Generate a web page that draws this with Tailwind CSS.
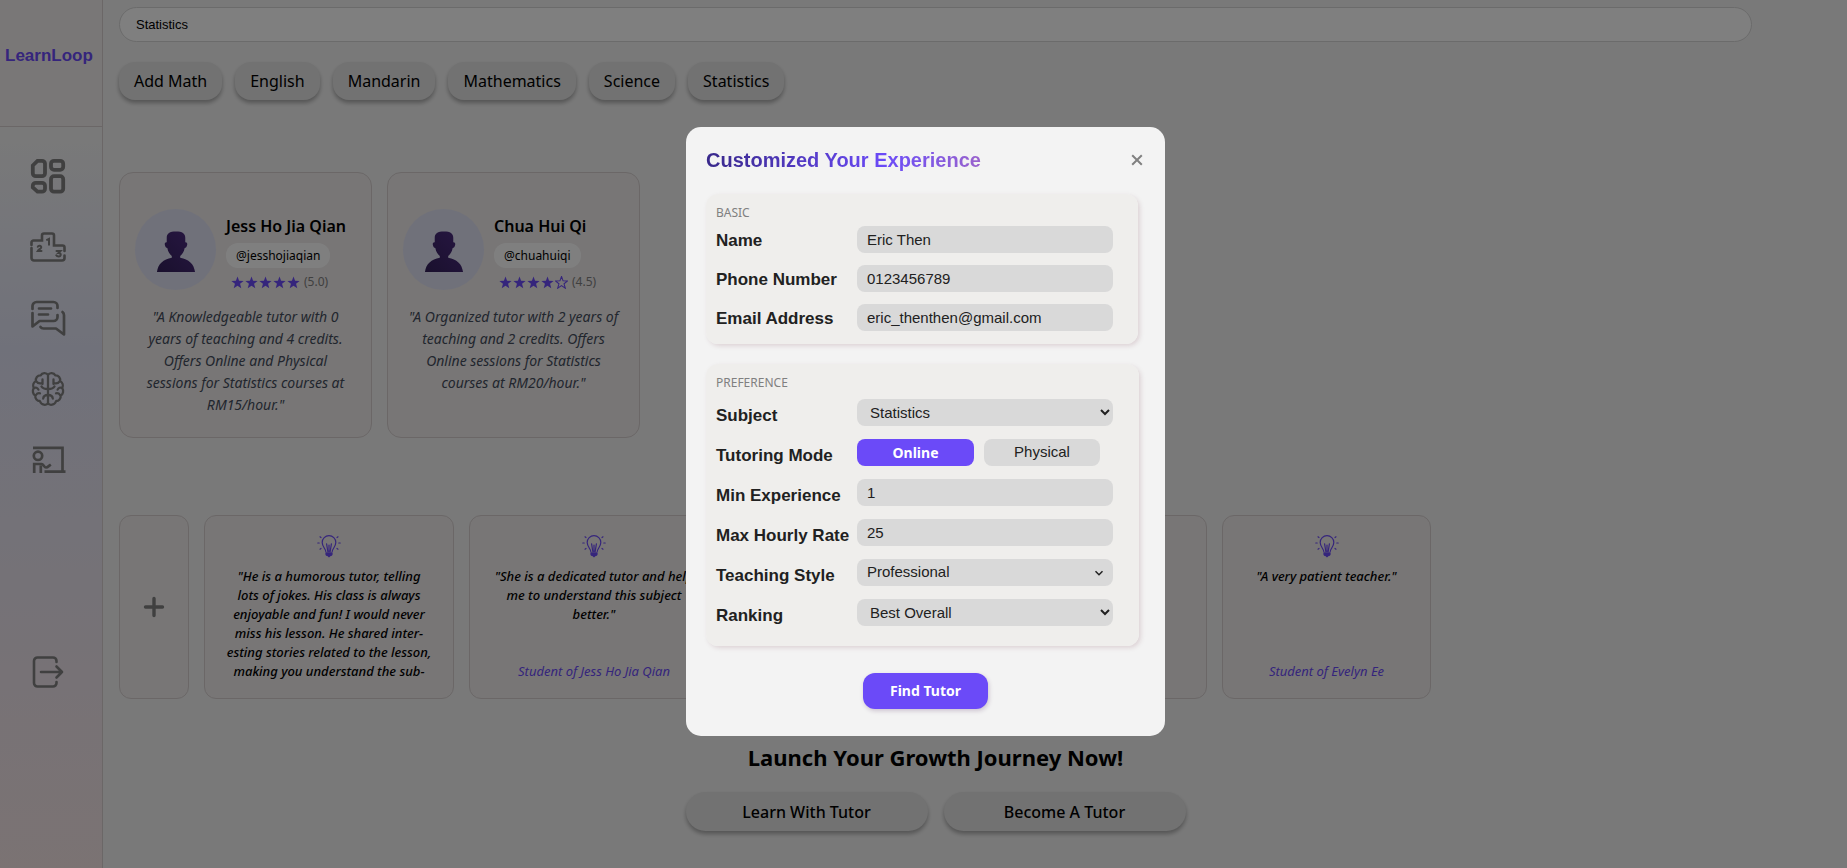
<!DOCTYPE html>
<html lang="en">
<head>
<meta charset="utf-8">
<meta name="viewport" content="width=device-width, initial-scale=1">
<title>LearnLoop</title>
<script src="https://cdn.jsdelivr.net/npm/@tailwindcss/browser@4"></script>
</head>
<body class="bg-[#f3f3f3] font-['Noto_Sans',sans-serif] text-black">
<svg class="absolute size-0" aria-hidden="true">
  <defs><linearGradient id="shade" x1="0" x2="1" y1="1" y2="0"><stop offset="0" stop-color="#33205a"/><stop offset="1" stop-color="#4e2d84"/></linearGradient></defs>
  <symbol id="star" viewBox="0 0 24 24"><path d="M12 1l2.900 7.900 8.400.3-6.600 5.200 2.300 8.100-7-4.700-7 4.700 2.300-8.100L.7 9.200l8.400-.3z"/></symbol>
  <symbol id="bulb" viewBox="0 0 24 24">
    <g fill="none" stroke="currentColor" stroke-width="1.200" stroke-linecap="round">
      <path d="M8.800 17.500c0-2.500-3.600-4.700-3.600-9.100a6.800 6.800 0 0 1 13.600 0c0 4.400-3.600 6.600-3.600 9.100"/>
      <path d="M10.800 17.500 9.600 9.800M13.200 17.500l1.200-7.700M12 17.500V11"/>
      <path d="M.8 9h1.400M21.800 9h1.400M3 2.800l1 .7M21 2.800l-1 .7M3 15.200l1-.7M21 15.200l-1-.7"/>
    </g>
    <path fill="currentColor" d="M8.400 18.200h7.200v2c0 1-1 1.700-1.900 1.900L12 23.500l-1.700-1.400c-.9-.2-1.900-.9-1.900-1.900z"/>
  </symbol>
  <symbol id="person" viewBox="0 0 40 42">
    <path d="M10.500 7c0-4.500 3-6.500 9.500-6.500S29.500 2.500 29.500 7v4.500c1.600-.2 2.300 1 1.900 2.800-.4 1.900-1.300 3-2.500 3-.8 4-2.400 6.500-4.600 8.200v1.800C33 29 38.500 33.500 39.500 42H.5C1.500 33.500 7 29 15.700 27.300v-1.800c-2.200-1.700-3.800-4.200-4.600-8.200-1.200 0-2.100-1.100-2.500-3-.4-1.800.3-3 1.900-2.800z" fill="url(#shade)"/>
  </symbol>
</svg>

<div class="flex min-h-screen">
  <aside class="flex w-[103px] shrink-0 flex-col border-r border-[#d6cfcf] bg-linear-to-b from-[#f3f3f3] from-15% via-[#e1e3f5] via-40% to-[#f6e6e7]">
    <div class="flex h-[127px] items-center border-b border-[#d6cfcf] bg-[#f3eeef] pb-[14px] pl-[5px]">
      <a href="#" class="font-['Liberation_Sans',sans-serif] text-[17px] font-bold text-[#6b4af8]">LearnLoop</a>
    </div>
    <nav class="flex flex-1 flex-col items-center gap-[35px] pt-[31px] pr-[6px] text-[#808080]">
      <a href="#" aria-label="Dashboard"><svg class="size-9" viewBox="0 0 36 36" fill="none" stroke="currentColor" stroke-width="3.800"><path d="M7.500 2.800H12a3 3 0 0 1 3 3v9.400a3 3 0 0 1-3 3H5.800a3 3 0 0 1-3-3V7.500z"/><rect x="21" y="2.800" width="12.200" height="9" rx="3"/><rect x="21" y="18.200" width="12.200" height="15.500" rx="3"/><path d="M5.800 24.800H12a3 3 0 0 1 3 3v2.900a3 3 0 0 1-3 3H7.500l-4.700-4.200v-1.700a3 3 0 0 1 3-3z"/></svg></a>
      <a href="#" aria-label="Ranking"><svg class="size-9" viewBox="0 0 36 36" fill="none" stroke="currentColor" stroke-width="2.600" stroke-linecap="round"><path d="M1.500 16v-2.500a2 2 0 0 1 2-2h8.500V6.500a2 2 0 0 1 2-2h8a2 2 0 0 1 2 2v10h8.500a2 2 0 0 1 2 2V22M34.500 26.500V29a2.500 2.500 0 0 1-2.500 2.500H4A2.500 2.500 0 0 1 1.500 29V19"/><path stroke-width="2" d="M17 10.800l2-1v6M7.800 17.800c.5-1.500 3.600-1.300 3.400.5-.1 1.300-2.300 2-3.400 3.700h3.700M26.500 22h4l-2 2c3 0 2.900 3.500.2 3.500-1.200 0-2-.4-2.400-1.200"/></svg></a>
      <a href="#" aria-label="Messages"><svg class="size-9" viewBox="0 0 36 36" fill="none" stroke="currentColor" stroke-width="2.700" stroke-linecap="round" stroke-linejoin="round"><path d="M2.500 9V6a4 4 0 0 1 4-4h17a4 4 0 0 1 4 4v2M2.500 13v13.500l7-5.500H23.500a4 4 0 0 0 4-4v-2M9 8.500h12M9 14.500h9M32.500 12c1 .8 1.500 1.800 1.500 3.200v19.300l-8-6H13.500c-1.500 0-2.500-.7-3-1.500"/></svg></a>
      <a href="#" aria-label="Quiz"><svg class="size-9" viewBox="0 0 36 36" fill="none" stroke="currentColor" stroke-width="2.300" stroke-linecap="round" stroke-linejoin="round"><path d="M18 4c-1.500-2.800-6-2.500-7.200.3C7.500 4 5.200 7 6 10c-2.800 1.600-3.500 4.500-2.200 7-1.700 2.700-1 6 1.400 7.400-.2 3.200 2 5.600 4.600 5.600 1.500 4.400 6.700 4.800 8.200 2zM18 4c1.500-2.800 6-2.500 7.200.3C28.500 4 30.800 7 30 10c2.800 1.600 3.500 4.500 2.200 7 1.700 2.700 1 6-1.400 7.400.2 3.200-2 5.600-4.600 5.600-1.500 4.400-6.700 4.800-8.200 2M18 4v28"/><path d="M12.500 8.500v4.500M6 10c1.200 2 3 2.600 5 2.300M3.800 17c2-1 3.800-.2 4.600 1.600M18 18c-3.500 0-5.700-1-6.500-2.500M6 24c1-1.600 2.500-2 4-1.700M18 24c-3 0-4.600 1.300-4.800 3.500M23.500 8.500v4.500M30 10c-1.200 2-3 2.600-5 2.300M32.200 17c-2-1-3.800-.2-4.600 1.600M18 18c3.500 0 5.700-1 6.500-2.500M30 24c-1-1.600-2.500-2-4-1.700M18 24c3 0 4.600 1.300 4.800 3.500"/></svg></a>
      <a href="#" aria-label="Tutoring"><svg class="size-9" viewBox="0 0 36 36" fill="none" stroke="currentColor" stroke-width="2.700"><path d="M3 5.800h29.500v23.600M14.500 29.600h21"/><circle cx="8" cy="13.800" r="4.200"/><path d="M4.200 31V22h7.500c1.700 0 2.500 3.500 4.300 3.500 1.500 0 3-1.700 4.800-3M10.800 31v-7.500"/></svg></a>
      <a href="#" aria-label="Log out" class="mt-auto mb-[178px]"><svg class="size-9" viewBox="0 0 36 36" fill="none" stroke="currentColor" stroke-width="2.600" stroke-linecap="round" stroke-linejoin="round"><path d="M26.500 8V7a3.500 3.500 0 0 0-3.500-3.500H7.500A3.500 3.500 0 0 0 4 7v22a3.500 3.500 0 0 0 3.500 3.500H23a3.500 3.500 0 0 0 3.500-3.500v-1M11 18h21M26.500 12.500 32 18l-5.500 5.500"/></svg></a>
    </nav>
  </aside>

  <main class="flex min-w-0 flex-1 flex-col pt-[7px] pr-[95px] pl-4">
    <input type="search" aria-label="Search subject" value="Statistics" class="h-[35px] w-full rounded-full border border-[#d6d6d6] bg-white px-4 font-['Liberation_Sans',sans-serif] text-[13px]">
    <div class="mt-5 flex gap-[13px] text-base">
      <button class="h-[38px] rounded-2xl bg-[#e4e4e4] px-[15px] shadow-[0_3px_4px_rgba(0,0,0,0.3)]">Add Math</button>
      <button class="h-[38px] rounded-2xl bg-[#e4e4e4] px-[15px] shadow-[0_3px_4px_rgba(0,0,0,0.3)]">English</button>
      <button class="h-[38px] rounded-2xl bg-[#e4e4e4] px-[15px] shadow-[0_3px_4px_rgba(0,0,0,0.3)]">Mandarin</button>
      <button class="h-[38px] rounded-2xl bg-[#e4e4e4] px-[15px] shadow-[0_3px_4px_rgba(0,0,0,0.3)]">Mathematics</button>
      <button class="h-[38px] rounded-2xl bg-[#e4e4e4] px-[15px] shadow-[0_3px_4px_rgba(0,0,0,0.3)]">Science</button>
      <button class="h-[38px] rounded-2xl bg-[#e4e4e4] px-[15px] shadow-[0_3px_4px_rgba(0,0,0,0.3)]">Statistics</button>
    </div>

    <section class="mt-[72px] flex gap-[15px]" aria-label="Tutors">
      <article class="min-h-[266px] w-[253px] rounded-[14px] border border-[#d6cfcf] bg-[#f0ecec] px-[15px] pt-9">
        <div class="flex gap-[10px]">
          <div class="flex size-[81px] shrink-0 items-center justify-center rounded-full bg-[#e1e3f5] pt-1"><svg class="h-[41px] w-10"><use href="#person"/></svg></div>
          <div class="flex flex-col items-start pt-[5px] whitespace-nowrap">
            <h3 class="text-base leading-6 font-semibold">Jess Ho Jia Qian</h3>
            <a href="#" class="mt-[5px] rounded-xl bg-white px-[10px] text-xs leading-[25px]">@jesshojiaqian</a>
            <div class="mt-1 flex items-center pl-[5px] text-[#6b4af8]">
              <span class="flex gap-px" role="img" aria-label="5 stars"><svg class="size-[13px] fill-current"><use href="#star"/></svg><svg class="size-[13px] fill-current"><use href="#star"/></svg><svg class="size-[13px] fill-current"><use href="#star"/></svg><svg class="size-[13px] fill-current"><use href="#star"/></svg><svg class="size-[13px] fill-current"><use href="#star"/></svg></span>
              <span class="ml-1 text-xs leading-5 text-[#808080]">(5.0)</span>
            </div>
          </div>
        </div>
        <p class="mt-[14px] text-center text-sm leading-[22px] text-[#444c5c] italic">"A Knowledgeable tutor with 0<br>years of teaching and 4 credits.<br>Offers Online and Physical<br>sessions for Statistics courses at<br>RM15/hour."</p>
      </article>
      <article class="min-h-[266px] w-[253px] rounded-[14px] border border-[#d6cfcf] bg-[#f0ecec] px-[15px] pt-9">
        <div class="flex gap-[10px]">
          <div class="flex size-[81px] shrink-0 items-center justify-center rounded-full bg-[#e1e3f5] pt-1"><svg class="h-[41px] w-10"><use href="#person"/></svg></div>
          <div class="flex flex-col items-start pt-[5px] whitespace-nowrap">
            <h3 class="text-base leading-6 font-semibold">Chua Hui Qi</h3>
            <a href="#" class="mt-[5px] rounded-xl bg-white px-[10px] text-xs leading-[25px]">@chuahuiqi</a>
            <div class="mt-1 flex items-center pl-[5px] text-[#6b4af8]">
              <span class="flex gap-px" role="img" aria-label="4.5 stars"><svg class="size-[13px] fill-current"><use href="#star"/></svg><svg class="size-[13px] fill-current"><use href="#star"/></svg><svg class="size-[13px] fill-current"><use href="#star"/></svg><svg class="size-[13px] fill-current"><use href="#star"/></svg><svg class="size-[13px] fill-none stroke-current stroke-2"><use href="#star"/></svg></span>
              <span class="ml-1 text-xs leading-5 text-[#808080]">(4.5)</span>
            </div>
          </div>
        </div>
        <p class="mt-[14px] text-center text-sm leading-[22px] whitespace-nowrap text-[#444c5c] italic">"A Organized tutor with 2 years of<br>teaching and 2 credits. Offers<br>Online sessions for Statistics<br>courses at RM20/hour."</p>
      </article>
    </section>

    <section class="mt-[77px] flex h-[184px] gap-[15px] text-center text-[13px] leading-[19px] whitespace-nowrap italic" aria-label="Testimonials">
      <button aria-label="Add testimonial" class="flex w-[70px] shrink-0 items-center justify-center rounded-xl border border-[#d6cfcf] bg-[#f0ecec] text-[#808080]"><svg class="size-6" viewBox="0 0 24 24" stroke="currentColor" stroke-width="3.400" stroke-linecap="round"><path d="M12 3.500v17M3.500 12h17"/></svg></button>
      <article class="flex w-[250px] shrink-0 flex-col items-center rounded-xl border border-[#d6cfcf] bg-[#f0ecec] pt-[18px]">
        <svg class="size-6 text-[#6b4af8]"><use href="#bulb"/></svg>
        <p class="mt-[9px] font-medium">"He is a humorous tutor, telling<br>lots of jokes. His class is always<br>enjoyable and fun! I would never<br>miss his lesson. He shared inter-<br>esting stories related to the lesson,<br>making you understand the sub-</p>
      </article>
      <article class="flex w-[250px] shrink-0 flex-col items-center rounded-xl border border-[#d6cfcf] bg-[#f0ecec] pt-[18px] pb-[17px]">
        <svg class="size-6 text-[#6b4af8]"><use href="#bulb"/></svg>
        <p class="mt-[9px] font-medium">"She is a dedicated tutor and help<br>me to understand this subject<br>better."</p>
        <a href="#" class="mt-auto text-[#6b4af8]">Student of Jess Ho Jia Qian</a>
      </article>
      <article class="w-[473px] shrink-0 rounded-xl border border-[#d6cfcf] bg-[#f0ecec]"></article>
      <article class="flex w-[209px] shrink-0 flex-col items-center rounded-xl border border-[#d6cfcf] bg-[#f0ecec] pt-[18px] pb-[17px]">
        <svg class="size-6 text-[#6b4af8]"><use href="#bulb"/></svg>
        <p class="mt-[9px] font-medium">"A very patient teacher."</p>
        <a href="#" class="mt-auto text-[#6b4af8]">Student of Evelyn Ee</a>
      </article>
    </section>

    <section class="mt-[42px] flex flex-col items-center">
      <h2 class="text-[22px] leading-8 font-bold">Launch Your Growth Journey Now!</h2>
      <div class="mt-[19px] flex gap-4 text-base font-medium">
        <button class="h-[39px] w-[242px] rounded-full bg-[#e4e4e4] shadow-[0_3px_4px_rgba(0,0,0,0.3)]">Learn With Tutor</button>
        <button class="h-[39px] w-[242px] rounded-full bg-[#e4e4e4] shadow-[0_3px_4px_rgba(0,0,0,0.3)]">Become A Tutor</button>
      </div>
    </section>
  </main>
</div>

<div class="fixed inset-0 flex items-center justify-center bg-black/50 pb-[5px] pl-1">
  <form role="dialog" aria-labelledby="dialog-title" class="w-[479px] rounded-[15px] bg-[#f3f3f3] px-5 pt-4 pb-[27px] font-['Liberation_Sans',sans-serif] text-[#212121]">
    <div class="flex items-center justify-between">
      <h1 id="dialog-title" class="bg-linear-to-r from-[#38288a] via-[#6b4af8] via-65% to-[#9a62cc] bg-clip-text text-[20px] leading-[34px] font-bold text-transparent">Customized Your Experience</h1>
      <button type="button" aria-label="Close" class="text-[#808080]"><svg class="size-4" viewBox="0 0 16 16" stroke="currentColor" stroke-width="2"><path d="M3.200 3.200l9.600 9.600M12.800 3.200l-9.600 9.600"/></svg></button>
    </div>

    <fieldset class="mt-[17px] mr-[7px] rounded-xl bg-[#efeeec] pt-[10px] pb-[13px] pl-[10px] shadow-[2px_2px_4px_rgba(160,120,130,0.25)]" aria-label="Basic">
      <p class="font-['Noto_Sans',sans-serif] text-xs leading-[18px] text-[#808080]">BASIC</p>
      <div class="mt-1 grid grid-cols-[141px_256px] gap-y-3 text-[15px]">
        <label for="name" class="pt-[5px] text-[17px] leading-5 font-bold">Name</label>
        <input id="name" value="Eric Then" class="h-[27px] rounded-lg bg-[#d9d9d9] px-[10px]">
        <label for="phone" class="pt-[5px] text-[17px] leading-5 font-bold">Phone Number</label>
        <input id="phone" type="tel" value="0123456789" class="h-[27px] rounded-lg bg-[#d9d9d9] px-[10px]">
        <label for="email" class="pt-[5px] text-[17px] leading-5 font-bold">Email Address</label>
        <input id="email" type="email" value="eric_thenthen@gmail.com" class="h-[27px] rounded-lg bg-[#d9d9d9] px-[10px]">
      </div>
    </fieldset>

    <fieldset class="mt-5 mr-[6px] rounded-xl bg-[#efeeec] pt-[10px] pb-5 pl-[10px] shadow-[2px_2px_4px_rgba(160,120,130,0.25)]" aria-label="Preference">
      <p class="font-['Noto_Sans',sans-serif] text-xs leading-[18px] text-[#808080]">PREFERENCE</p>
      <div class="mt-[7px] grid grid-cols-[141px_256px] gap-y-[13px] text-[15px]">
        <label for="subject" class="pt-[7px] text-[17px] leading-5 font-bold">Subject</label>
        <select id="subject" class="h-[27px] rounded-lg bg-[#d9d9d9] px-[9px]"><option>Statistics</option></select>
        <span class="pt-[7px] text-[17px] leading-5 font-bold">Tutoring Mode</span>
        <div class="flex gap-[10px]">
          <button type="button" aria-pressed="true" class="h-[27px] w-[117px] rounded-lg bg-[#6b4af8] font-['Noto_Sans',sans-serif] text-sm font-bold text-white">Online</button>
          <button type="button" aria-pressed="false" class="h-[27px] w-[116px] rounded-lg bg-[#d9d9d9]">Physical</button>
        </div>
        <label for="experience" class="pt-[7px] text-[17px] leading-5 font-bold">Min Experience</label>
        <input id="experience" value="1" class="h-[27px] rounded-lg bg-[#d9d9d9] px-[10px]">
        <label for="rate" class="pt-[7px] text-[17px] leading-5 font-bold">Max Hourly Rate</label>
        <input id="rate" value="25" class="h-[27px] rounded-lg bg-[#d9d9d9] px-[10px]">
        <label for="style" class="pt-[7px] text-[17px] leading-5 font-bold">Teaching Style</label>
        <div class="grid items-center">
          <select id="style" class="col-start-1 row-start-1 h-[27px] appearance-none rounded-lg bg-[#d9d9d9] px-[10px]"><option>Professional</option></select>
          <svg class="pointer-events-none col-start-1 row-start-1 mr-[9px] size-[10px] justify-self-end" viewBox="0 0 10 10" fill="none" stroke="currentColor" stroke-width="1.500"><path d="M1.500 3.200 5 6.700l3.500-3.500"/></svg>
        </div>
        <label for="ranking" class="pt-[7px] text-[17px] leading-5 font-bold">Ranking</label>
        <select id="ranking" class="h-[27px] rounded-lg bg-[#d9d9d9] px-[9px]"><option>Best Overall</option></select>
      </div>
    </fieldset>

    <div class="mt-[27px] flex justify-center">
      <button type="submit" class="h-9 w-[125px] rounded-xl bg-[#6b4af8] font-['Noto_Sans',sans-serif] text-sm font-bold text-white shadow-[1px_2px_4px_rgba(120,90,130,0.3)]">Find Tutor</button>
    </div>
  </form>
</div>
</body>
</html>
